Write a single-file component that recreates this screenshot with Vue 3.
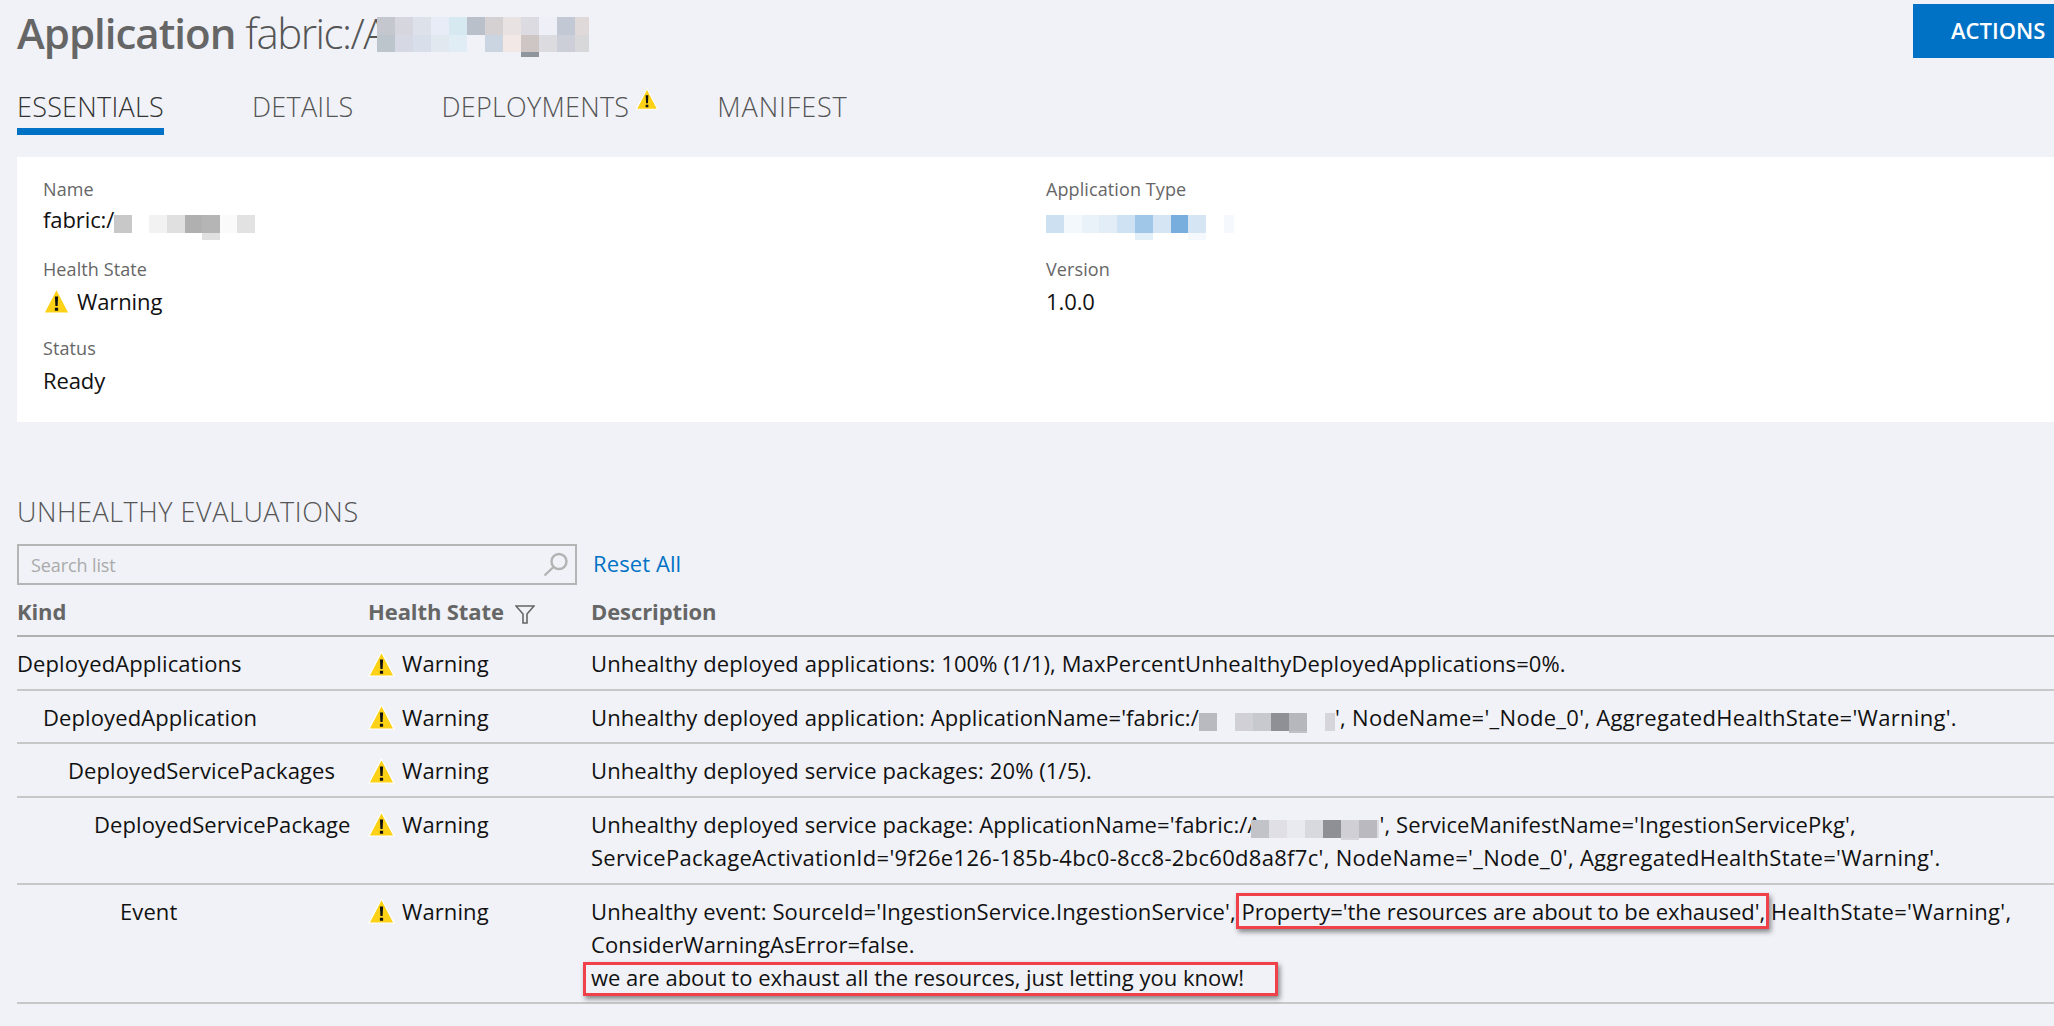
<template>
  <div class="page">
    <div class="top">
      <h1 class="title"><b>Application</b> <span class="path">fabric:/A</span><Pixels class="over-a" :w="18" :width="212" :rows="titleBlur" /></h1>
      <button class="actions">ACTIONS</button>
    </div>

    <div class="tabs">
      <span class="tab active">ESSENTIALS</span>
      <span class="tab t-details">DETAILS</span>
      <span class="tab t-deploy">DEPLOYMENTS<svg class="tab-warn" viewBox="0 0 26 26"><use href="#warn" /></svg></span>
      <span class="tab t-manifest">MANIFEST</span>
    </div>

    <svg class="defs" width="0" height="0">
      <symbol id="warn" viewBox="0 0 26 26">
        <path d="M13 1 25.5 25H.5z" fill="#fcd116" stroke="#fff" stroke-width="1.2" />
        <path d="M11.4 8.5h3.2l-.5 9.5h-2.2zM11.4 19.8h3.2v3h-3.2z" fill="#111" />
      </symbol>
    </svg>

    <section class="card">
      <div class="field">
        <div class="label">Name</div>
        <div class="value">fabric:/<Pixels :w="17.6" :width="141" :rows="nameBlur" /></div>
      </div>
      <div class="field">
        <div class="label">Application Type</div>
        <div class="value"><Pixels :w="17.8" :width="188" :rows="typeBlur" /></div>
      </div>
      <div class="field">
        <div class="label">Health State</div>
        <div class="value state"><svg class="warn"><use href="#warn" /></svg>Warning</div>
      </div>
      <div class="field">
        <div class="label">Version</div>
        <div class="value">1.0.0</div>
      </div>
      <div class="field">
        <div class="label">Status</div>
        <div class="value">Ready</div>
      </div>
    </section>

    <h2 class="section-title">UNHEALTHY EVALUATIONS</h2>

    <div class="filter-bar">
      <div class="search">
        <span class="placeholder">Search list</span>
        <svg class="search-icon" viewBox="0 0 26 26" fill="none" stroke="#b3b3b3" stroke-width="2.4">
          <circle cx="16" cy="9.5" r="7.5" />
          <path d="M10.5 15 1.5 23.5" />
        </svg>
      </div>
      <a class="reset">Reset All</a>
    </div>

    <div class="row head">
      <div class="c-kind">Kind</div>
      <div class="c-health">Health State
        <svg class="funnel" viewBox="0 0 20 19" fill="none" stroke="#666" stroke-width="1.6">
          <path d="M1 1h18l-7 8v9H8V9z" />
        </svg>
      </div>
      <div class="c-desc">Description</div>
    </div>

    <div v-for="(r, i) in rows" :key="r.kind" class="row">
      <div class="c-kind" :style="{ paddingLeft: indents[i] + 'px' }">{{ r.kind }}</div>
      <div class="c-health state"><svg class="warn"><use href="#warn" /></svg>Warning</div>
      <div class="c-desc">
        <template v-if="i === 0">Unhealthy deployed applications: 100% (1/1), MaxPercentUnhealthyDeployedApplications=0%.</template>
        <template v-else-if="i === 1">Unhealthy deployed application: ApplicationName='fabric:/<Pixels :w="18" :width="136" :rows="appBlur" /><span class="wide">', NodeName='_Node_0', AggregatedHealthState='Warning'.</span></template>
        <template v-else-if="i === 2">Unhealthy deployed service packages: 20% (1/5).</template>
        <template v-else-if="i === 3">Unhealthy deployed service package: ApplicationName='fabric:/A<Pixels class="over-a" :w="18" :width="128" :rows="pkgBlur" />', ServiceManifestName='IngestionServicePkg',<br /><span class="wide">ServicePackageActivationId='9f26e126-185b-4bc0-8cc8-2bc60d8a8f7c', NodeName='_Node_0', AggregatedHealthState='Warning'.</span></template>
        <template v-else>Unhealthy event: SourceId='IngestionService.IngestionService', <span class="mark m-prop">Property='the resources are about to be exhaused',</span> <span class="wide">HealthState='Warning',</span><br />ConsiderWarningAsError=false.<br /><span class="mark m-msg">we are about to exhaust all the resources, just letting you know!</span></template>
      </div>
    </div>
  </div>
</template>

<script setup>
import { h } from 'vue'

// the blurred-out names in the screenshot: rows of coloured cells
const Pixels = (props) =>
  h('span', { class: 'px', style: { width: props.width + 'px' } },
    props.rows.map((row) =>
      h('span', { class: 'px-row', style: { height: row.h + 'px' } },
        row.cells.map((c) =>
          h('span', { class: 'px-cell', style: { width: props.w + 'px', background: c || 'transparent' } })))))
Pixels.props = ['w', 'width', 'rows']

const titleBlur = [
  { h: 18, cells: ['#c4c8ce', '#d6d7de', '#dde1ea', '#e8ecf6', '#d6e8f0', '#b9c0ca', '#d5d1d3', '#e8e2e2', '#dbdbe1', '#eff0f7', '#c2c9d4', '#e0d9da'] },
  { h: 17, cells: ['#bcc5cc', '#d6d9e4', '#d9deeb', '#e2e8ef', '#e0edf5', '#f0f2f7', '#cbd5e1', '#f2e9e6', '#cec5c5', '#dcdce0', '#cdcfd8', '#d8d7d9'] },
  { h: 5, cells: ['', '', '', '', '', '', '', '', '#8f959c'] },
]
const nameBlur = [
  { h: 18, cells: ['#c8c8c8', '#fff', '#f2f2f2', '#e0e0e0', '#b0b0b0', '#b5b5b5', '#fafafa', '#e2e2e2'] },
  { h: 7, cells: ['', '', '', '', '', '#e0e0e0'] },
]
const typeBlur = [
  { h: 18, cells: ['#cce0f2', '#f3f8fc', '#eaf2f9', '#e2edf7', '#cfe2f3', '#a0c6e8', '#d6e5f4', '#78aedd', '#d6e5f4', '#fff', '#f5f9fd'] },
  { h: 7, cells: ['', '', '', '', '', '#e2eef8', '', '', '#f5f9fd'] },
]
const appBlur = [
  { h: 18, cells: ['#b9b9c0', '', '#d0d0d6', '#c8c8cf', '#8f8f96', '#b6b6bd', '', '#d5d5db'] },
  { h: 2, cells: ['', '', '', '', '', '#c0c0c6'] },
]
const pkgBlur = [
  { h: 18, cells: ['#c2c2c9', '#dfdfe5', '#e9eaf0', '#d8d9de', '#8f8f96', '#cfcfd5', '#b9b9bf', '#dcdce2'] },
  { h: 2, cells: ['', '', '', '', '', '#d5d5dc'] },
]

const indents = [0, 26, 51, 77, 103]
const rows = [
  { kind: 'DeployedApplications' },
  { kind: 'DeployedApplication' },
  { kind: 'DeployedServicePackages' },
  { kind: 'DeployedServicePackage' },
  { kind: 'Event' },
]
</script>

<style>
.px { display: inline-flex; flex-direction: column; vertical-align: -5px; height: 18px; }
.px-row { display: flex; flex: none; overflow: hidden; }
.px-cell { display: block; flex: none; }
</style>

<style scoped>
.page {
  width: 2054px;
  height: 1026px;
  overflow: hidden;
  box-sizing: border-box;
  padding-left: 17px;
  background: #f0f2f7;
  font-family: "Open Sans", sans-serif;
  font-size: 22px;
  letter-spacing: 0.1px;
  line-height: 33px;
  color: #111;
}
.top {
  display: flex;
  justify-content: space-between;
  height: 66px;
}
.title {
  margin: 0;
  font-size: 42px;
  font-weight: 300;
  line-height: 66px;
  color: #555;
  letter-spacing: -1px;
  white-space: nowrap;
}
.title b { font-weight: 600; color: #666; }
.path { letter-spacing: -1.5px; }
.over-a { margin-left: -10px; }
.title .px { vertical-align: top; margin-top: 17px; }
.actions {
  width: 141px;
  height: 54px;
  margin-top: 4px;
  padding: 0 4px 2px 38px;
  border: none;
  background: #0072c6;
  color: #fff;
  font: 600 22px "Open Sans", sans-serif;
  text-align: left;
}
.tabs {
  display: flex;
  height: 69px;
  box-sizing: border-box;
  padding-top: 22px;
  font-size: 27px;
  font-weight: 300;
  color: #555;
  letter-spacing: 0.25px;
}
.tab { display: block; height: 47px; box-sizing: border-box; padding-top: 2px; white-space: nowrap; position: relative; }
.tab.active { color: #333; border-bottom: 7px solid #0072c6; }
.t-details { margin-left: 88px; }
.t-deploy { margin-left: 88px; }
.t-manifest { margin-left: 88px; letter-spacing: 0.9px; }
.tab-warn { position: absolute; right: -29px; top: 0; width: 22px; height: 22px; }
.defs { position: absolute; }
.card {
  display: grid;
  grid-template-columns: 1003px 1fr;
  align-content: start;
  height: 265px;
  margin-top: 22px;
  box-sizing: border-box;
  padding: 20px 0 0 26px;
  background: #fff;
}
.field { height: 79px; }
.label { font-size: 18px; line-height: 24px; color: #666; }
.value { line-height: 32px; padding-top: 2px; letter-spacing: -0.1px; }
.field:nth-child(n+3) .value { padding-top: 4px; }
.field:nth-child(n+3) .label { margin-top: 1px; }
.state { display: flex; align-items: center; }
.warn { width: 27px; height: 26px; margin-right: 7px; }
.section-title {
  margin: 73px 0 0;
  font-size: 27px;
  font-weight: 300;
  line-height: 34px;
  color: #555;
  letter-spacing: 0.55px;
}
.filter-bar {
  display: flex;
  align-items: center;
  height: 41px;
  margin-top: 15px;
}
.search {
  display: flex;
  align-items: center;
  justify-content: space-between;
  width: 560px;
  height: 41px;
  box-sizing: border-box;
  padding: 0 6px 0 12px;
  border: 2px solid #b5b5b5;
}
.placeholder { margin-top: 2px; font-size: 18px; letter-spacing: -0.1px; color: #aaa; }
.search-icon { width: 26px; height: 26px; }
.reset { margin: 0 0 2px 16px; color: #0072c6; }
.row {
  display: flex;
  padding: 10px 0 8.67px;
  border-bottom: 2px solid #c8c8c8;
  white-space: nowrap;
}
.row.head {
  height: 52px;
  box-sizing: border-box;
  padding: 10px 0 0;
  border-bottom-color: #b0b0b0;
  font-weight: 700;
  letter-spacing: -0.1px;
  color: #666;
}
.c-kind { width: 351px; flex: none; box-sizing: border-box; }
.c-health { width: 223px; flex: none; }
.c-health.state { height: 33px; }
.c-desc { flex: 1; }
.wide { letter-spacing: 0.3px; }
.funnel { width: 20px; height: 19px; margin-left: 6px; vertical-align: -4px; }
.mark { position: relative; }
.m-prop { letter-spacing: -0.05px; }
.m-msg { letter-spacing: 0; }
.mark::after {
  content: "";
  position: absolute;
  border: 3px solid #f0404a;
  box-shadow: 2px 3px 5px rgba(0, 0, 0, 0.45);
  pointer-events: none;
}
.m-prop::after { left: -6px; right: -4px; top: -3px; bottom: -3px; }
.m-msg::after { left: -8px; right: -34px; top: 0; bottom: -4px; }
</style>
